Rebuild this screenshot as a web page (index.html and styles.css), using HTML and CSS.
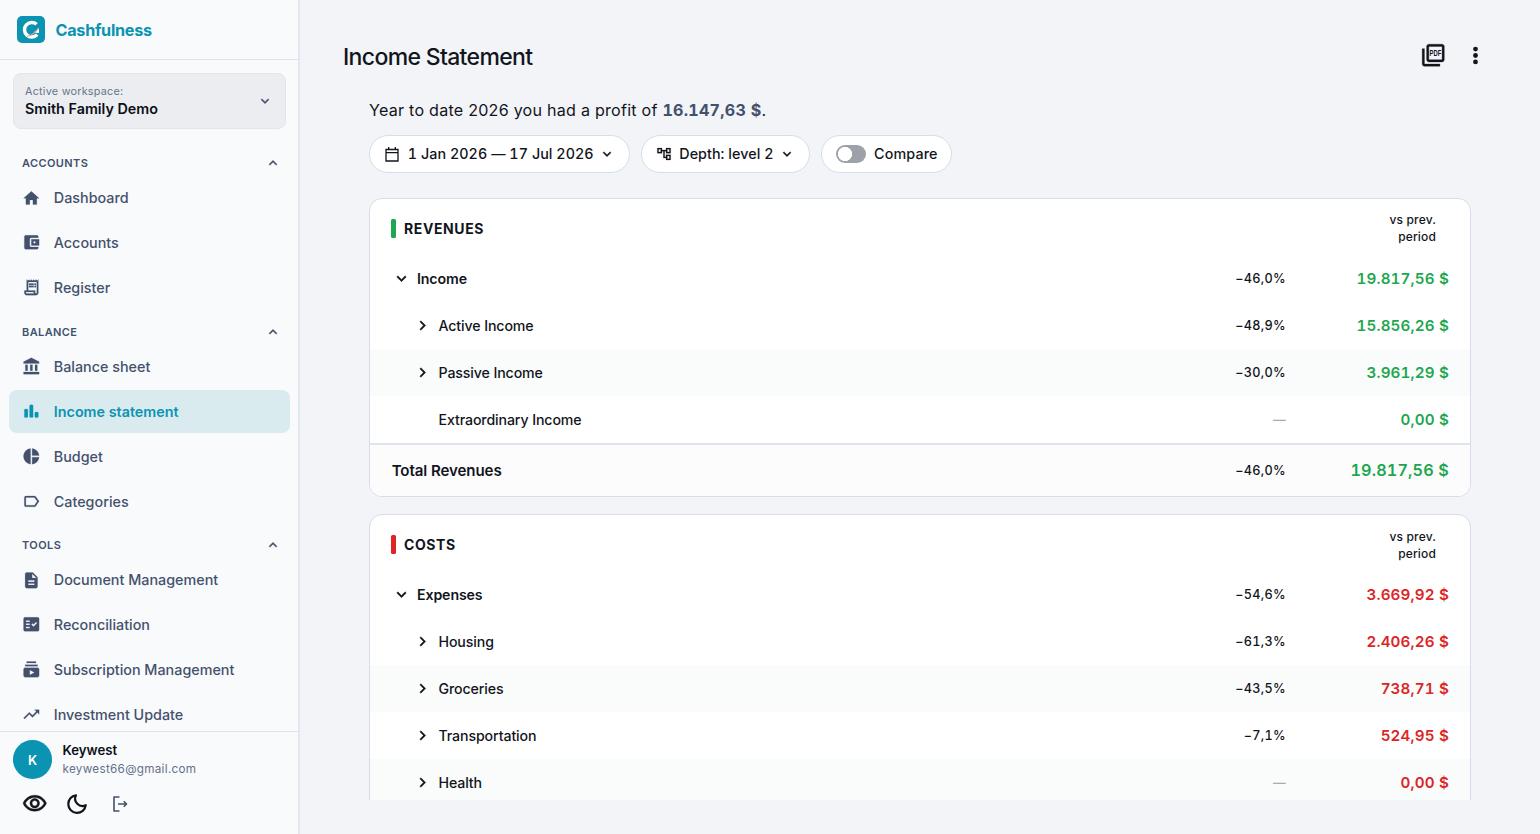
FILE: index.html
```html
<!DOCTYPE html>
<html lang="en">
<head>
<meta charset="utf-8">
<title>Cashfulness – Income Statement</title>
<link rel="stylesheet" href="styles.css">
</head>
<body>
<svg class="sprite" aria-hidden="true">
  <symbol id="less" viewBox="0 0 24 24"><path d="M12 8l-6 6 1.41 1.41L12 10.83l4.59 4.58L18 14z"/></symbol>
  <symbol id="more" viewBox="0 0 24 24"><path d="M16.59 8.59L12 13.17 7.41 8.59 6 10l6 6 6-6z"/></symbol>
  <symbol id="right" viewBox="0 0 24 24"><path d="M10 6L8.59 7.41 13.17 12l-4.58 4.59L10 18l6-6z"/></symbol>
</svg>
<div class="app">
  <aside class="sidebar">
    <div class="brand">
      <svg class="logo" viewBox="0 0 28 27"><rect width="28" height="27" rx="5" fill="#0b93b2"/><path d="M19.600 8.200A7.300 7.300 0 1 0 20.200 18.600" fill="none" stroke="#fff" stroke-width="3.500"/><path d="M16.500 16.500L22 12.500V17z" fill="#fff"/><path d="M10 20.200C14.500 19.800 18.500 16.800 21.600 11.800" fill="none" stroke="#e99a90" stroke-width="1.100"/></svg>
      <span class="brand-name">Cashfulness</span>
    </div>
    <div class="workspace">
      <div class="workspace-text"><span class="workspace-label">Active workspace:</span><span class="workspace-name">Smith Family Demo</span></div>
      <svg class="chev"><use href="#more"/></svg>
    </div>
    <nav class="nav">
      <div class="group"><span>ACCOUNTS</span><svg class="chev"><use href="#less"/></svg></div>
      <a class="item"><svg class="icon" viewBox="0 0 24 24"><path d="M10 20v-6h4v6h5v-8h3L12 3 2 12h3v8z"/></svg><span>Dashboard</span></a>
      <a class="item"><svg class="icon" viewBox="0 0 24 24"><path d="M21 18v1c0 1.100-.9 2-2 2H5c-1.110 0-2-.9-2-2V5c0-1.100.89-2 2-2h14c1.100 0 2 .9 2 2v1h-9c-1.110 0-2 .9-2 2v8c0 1.100.89 2 2 2h9zm-9-2h10V8H12v8zm4-2.500c-.83 0-1.500-.67-1.500-1.500s.67-1.500 1.500-1.500 1.500.67 1.500 1.500-.67 1.500-1.500 1.500z"/></svg><span>Accounts</span></a>
      <a class="item"><svg class="icon" viewBox="0 0 24 24"><path d="M19.500 3.500L18 2l-1.500 1.500L15 2l-1.500 1.500L12 2l-1.500 1.500L9 2 7.500 3.500 6 2v14H3v3c0 1.660 1.340 3 3 3h12c1.660 0 3-1.340 3-3V2l-1.500 1.500zM15 20H6c-.55 0-1-.45-1-1v-1h10v2zm4-1c0 .55-.45 1-1 1s-1-.45-1-1v-3H8V5h11v14zM9 7h6v2H9zM16 7h2v2h-2zM9 10h6v2H9zM16 10h2v2h-2z"/></svg><span>Register</span></a>
      <div class="group"><span>BALANCE</span><svg class="chev"><use href="#less"/></svg></div>
      <a class="item"><svg class="icon" viewBox="0 0 24 24"><path d="M4.300 10h3v7.500h-3zM10.500 10h3v7.500h-3zM16.700 10h3v7.500h-3zM2 19.200h20V22H2zM12 1L2 6v2.200h20V6z"/></svg><span>Balance sheet</span></a>
      <a class="item active"><svg class="icon" viewBox="0 0 24 24"><rect x="3" y="9" width="4.600" height="11" rx="1.500"/><rect x="9.700" y="3.500" width="4.600" height="16.500" rx="1.500"/><rect x="16.400" y="13" width="4.600" height="7" rx="1.500"/></svg><span>Income statement</span></a>
      <a class="item"><svg class="icon" viewBox="0 0 24 24"><path d="M11 2v20c-5.070-.5-9-4.790-9-10s3.930-9.500 9-10zm2.030 0v8.990H22c-.47-4.740-4.240-8.520-8.970-8.990zm0 11.010V22c4.740-.47 8.500-4.250 8.970-8.990h-8.970z"/></svg><span>Budget</span></a>
      <a class="item"><svg class="icon" viewBox="0 0 24 24"><path d="M17.630 5.840C17.270 5.330 16.670 5 16 5L5 5.010C3.900 5.010 3 5.900 3 7v10c0 1.100.9 1.990 2 1.990L16 19c.67 0 1.270-.33 1.630-.84L22 12l-4.370-6.160zM16 17H5V7h11l3.550 5L16 17z"/></svg><span>Categories</span></a>
      <div class="group"><span>TOOLS</span><svg class="chev"><use href="#less"/></svg></div>
      <a class="item"><svg class="icon" viewBox="0 0 24 24"><path d="M14 2H6c-1.100 0-1.990.9-1.990 2L4 20c0 1.100.89 2 1.990 2H18c1.100 0 2-.9 2-2V8l-6-6zm2 16H8v-2h8v2zm0-4H8v-2h8v2zm-3-5V3.500L18.500 9H13z"/></svg><span>Document Management</span></a>
      <a class="item"><svg class="icon" viewBox="0 0 24 24"><path d="M20 3H4c-1.100 0-2 .9-2 2v14c0 1.100.9 2 2 2h16c1.100 0 2-.9 2-2V5c0-1.100-.9-2-2-2zM10 17H5v-2h5v2zm0-4H5v-2h5v2zm0-4H5V7h5v2zm4.820 6L12 12.160l1.410-1.410 1.410 1.420L17.990 9l1.420 1.420L14.820 15z"/></svg><span>Reconciliation</span></a>
      <a class="item"><svg class="icon" viewBox="0 0 24 24"><path d="M20 8H4V6h16v2zm-2-6H6v2h12V2zm4 10v8c0 1.100-.9 2-2 2H4c-1.100 0-2-.9-2-2v-8c0-1.100.9-2 2-2h16c1.100 0 2 .9 2 2zm-6 4l-6-3.270v6.530L16 16z"/></svg><span>Subscription Management</span></a>
      <a class="item"><svg class="icon" viewBox="0 0 24 24"><path d="M16 6l2.290 2.290-4.880 4.880-4-4L2 16.590 3.410 18l6-6 4 4 6.300-6.290L22 12V6z"/></svg><span>Investment Update</span></a>
    </nav>
    <div class="user">
      <div class="user-row">
        <div class="avatar">K</div>
        <div class="user-text"><span class="user-name">Keywest</span><span class="user-mail">keywest66@gmail.com</span></div>
      </div>
      <div class="user-actions">
        <svg class="eye" viewBox="0 0 24 24"><path d="M12 6c3.790 0 7.170 2.130 8.820 5.500C19.170 14.870 15.790 17 12 17s-7.170-2.130-8.820-5.500C4.830 8.130 8.210 6 12 6m0-2C7 4 2.730 7.110 1 11.500 2.730 15.890 7 19 12 19s9.270-3.110 11-7.500C21.270 7.110 17 4 12 4zm0 5c1.380 0 2.500 1.120 2.500 2.500S13.380 14 12 14s-2.500-1.120-2.500-2.500S10.620 9 12 9m0-2c-2.480 0-4.500 2.020-4.500 4.500S9.520 16 12 16s4.500-2.020 4.500-4.500S14.480 7 12 7z"/></svg>
        <svg class="moon" viewBox="0 0 24 24"><path d="M11 3.300A8.800 8.800 0 1 0 20.800 13.200 7.300 7.300 0 0 1 11 3.300z"/></svg>
        <svg class="logout" viewBox="0 0 18 18"><path d="M8.500 2H3v14h5.500M7 9h8.500M12.800 6.300L15.500 9l-2.700 2.700"/></svg>
      </div>
    </div>
  </aside>
  <main class="main">
    <header class="top">
      <h1>Income Statement</h1>
      <div class="top-actions">
        <svg class="pdf" viewBox="0 0 24 24"><path d="M20 2H8c-1.100 0-2 .9-2 2v12c0 1.100.9 2 2 2h12c1.100 0 2-.9 2-2V4c0-1.100-.9-2-2-2zm0 14H8V4h12v12zM4 6H2v14c0 1.100.9 2 2 2h14v-2H4V6z"/><text x="14" y="12.800" text-anchor="middle" textLength="10.600" lengthAdjust="spacingAndGlyphs">PDF</text></svg>
        <svg class="dots" viewBox="0 0 24 24"><circle cx="12" cy="5.800" r="2.300"/><circle cx="12" cy="12" r="2.300"/><circle cx="12" cy="18.200" r="2.300"/></svg>
      </div>
    </header>
    <div class="content">
      <p class="summary">Year to date 2026 you had a profit of <b>16.147,63 $</b>.</p>
      <div class="filters">
        <button class="pill date"><svg class="cal" viewBox="0 0 16 16"><path d="M2 3.500h12V15H2zM2 6.600h12M4.700 1v2.500M11.300 1v2.500"/></svg><span>1 Jan 2026 — 17 Jul 2026</span><svg class="chev"><use href="#more"/></svg></button>
        <button class="pill depth"><svg class="tree" viewBox="0 0 24 24"><path d="M22 11V3h-7v3H9V3H2v8h7V8h2v10h4v3h7v-8h-7v3h-2V8h2v3h7zM7 9H4V5h3v4zm10 6h3v4h-3v-4zm0-10h3v4h-3V5z"/></svg><span>Depth: level 2</span><svg class="chev"><use href="#more"/></svg></button>
        <button class="pill compare"><i class="switch"></i><span>Compare</span></button>
      </div>
      <div class="scroll">
        <section class="card revenues">
          <div class="card-head"><h2>REVENUES</h2><span class="vs">vs prev.<br>period</span></div>
          <div class="row parent"><svg class="tog"><use href="#more"/></svg><span class="name">Income</span><span class="pct">−46,0%</span><span class="amt">19.817,56 $</span></div>
          <div class="row child"><svg class="tog"><use href="#right"/></svg><span class="name">Active Income</span><span class="pct">−48,9%</span><span class="amt">15.856,26 $</span></div>
          <div class="row child alt"><svg class="tog"><use href="#right"/></svg><span class="name">Passive Income</span><span class="pct">−30,0%</span><span class="amt">3.961,29 $</span></div>
          <div class="row child"><svg class="tog"></svg><span class="name">Extraordinary Income</span><span class="pct none">—</span><span class="amt">0,00 $</span></div>
          <div class="row total"><span class="name">Total Revenues</span><span class="pct">−46,0%</span><span class="amt">19.817,56 $</span></div>
        </section>
        <section class="card costs">
          <div class="card-head"><h2>COSTS</h2><span class="vs">vs prev.<br>period</span></div>
          <div class="row parent"><svg class="tog"><use href="#more"/></svg><span class="name">Expenses</span><span class="pct">−54,6%</span><span class="amt">3.669,92 $</span></div>
          <div class="row child"><svg class="tog"><use href="#right"/></svg><span class="name">Housing</span><span class="pct">−61,3%</span><span class="amt">2.406,26 $</span></div>
          <div class="row child alt"><svg class="tog"><use href="#right"/></svg><span class="name">Groceries</span><span class="pct">−43,5%</span><span class="amt">738,71 $</span></div>
          <div class="row child"><svg class="tog"><use href="#right"/></svg><span class="name">Transportation</span><span class="pct">−7,1%</span><span class="amt">524,95 $</span></div>
          <div class="row child alt"><svg class="tog"><use href="#right"/></svg><span class="name">Health</span><span class="pct none">—</span><span class="amt">0,00 $</span></div>
        </section>
      </div>
    </div>
  </main>
</div>
</body>
</html>
```
FILE: styles.css
```css
* { box-sizing: border-box; }
body { margin: 0; font-family: Inter, "Liberation Sans", sans-serif; color: #12151c; background: #f2f4f8; }
.sprite { display: none; }
svg { display: block; flex: none; fill: currentColor; }
.app { display: flex; width: 100vw; height: 100vh; overflow: hidden; }

.sidebar { display: flex; flex-direction: column; flex: none; width: 300px; background: #f8fafc; border-right: 2px solid #e2e6ed; color: #44516c; }
.brand { display: flex; align-items: center; gap: 10.500px; flex: none; height: 60px; padding-left: 17px; border-bottom: 1px solid #e0e3e8; }
.logo { width: 28px; height: 27px; }
.brand-name { font-size: 16.200px; font-weight: 700; letter-spacing: -.27px; color: #0b93b2; }
.workspace { display: flex; align-items: center; justify-content: space-between; flex: none; height: 56px; margin: 13px 12px 0 13px; padding: 0 12px 0 11px; border: 1px solid #e2e6ec; border-radius: 8px; background: #ebedf1; }
.workspace-text { display: flex; flex-direction: column; padding-bottom: 2px; }
.workspace-label { font-size: 10.800px; line-height: 17px; letter-spacing: .24px; color: #697489; }
.workspace-name { font-size: 14.350px; line-height: 18px; font-weight: 600; color: #0c0f16; }
.chev { width: 16px; height: 16px; stroke: currentColor; stroke-width: .500; }
.nav { flex: 1; min-height: 0; overflow: hidden; padding: 11.800px 8px 0 9px; }
.group { display: flex; align-items: center; justify-content: space-between; height: 35.900px; padding: 8.500px 9px 0 13px; font-size: 11px; font-weight: 600; letter-spacing: .4px; }
.item + .group { margin-top: -1.900px; }
.item { display: flex; align-items: center; gap: 13.300px; height: 42.600px; margin-bottom: 2.260px; padding-left: 12.800px; border-radius: 8px; font-size: 14.350px; font-weight: 500; letter-spacing: 0; }
.icon { width: 18.700px; height: 18.700px; stroke: currentColor; stroke-width: .250; }
.active { background: #daebef; color: #0b93b2; font-weight: 600; }
.user { flex: none; height: 103px; border-top: 1px solid #e0e3e8; padding: 8px 13px 0; }
.user-row { display: flex; gap: 10.500px; height: 39px; }
.avatar { display: grid; place-items: center; width: 39px; height: 39px; border-radius: 50%; background: #0b93b2; color: #fff; font-size: 13px; font-weight: 600; }
.user-text { display: flex; flex-direction: column; padding-top: 2px; }
.user-name { font-size: 13.200px; line-height: 17.500px; font-weight: 600; color: #0c0f16; }
.user-mail { font-size: 11.700px; line-height: 18px; letter-spacing: .3px; color: #64708a; }
.user-actions { display: flex; align-items: center; padding: 12px 0 0 8.500px; height: 38px; color: #12151c; }
.eye { width: 25.500px; height: 25.500px; stroke: currentColor; stroke-width: .400; }
.moon { width: 24px; height: 24px; margin-left: 17.500px; fill: none; stroke: currentColor; stroke-width: 2.200; stroke-linejoin: round; }
.logout { width: 18px; height: 18px; margin-left: 22px; fill: none; stroke: #44516c; stroke-width: 1.600; stroke-linejoin: round; }

.main { flex: 1; min-width: 0; display: flex; flex-direction: column; }
.top { display: flex; align-items: center; justify-content: space-between; height: 98px; padding: 15px 52px 0 43px; }
h1 { margin: 0; font-size: 23px; font-weight: 500; letter-spacing: -.66px; }
.top-actions { display: flex; align-items: center; gap: 17px; padding-bottom: 2px; }
.pdf { width: 26.500px; height: 26.500px; stroke: currentColor; stroke-width: .300; }
.pdf text { font: 700 8.200px "Liberation Sans", sans-serif; stroke: none; }
.dots { width: 25px; height: 25px; }
.content { width: 1102px; margin-left: 69px; }
.summary { margin: 0; font-size: 16.100px; line-height: 24px; letter-spacing: .24px; }
.summary b { color: #44516c; font-weight: 700; font-variant-numeric: tabular-nums; }
.filters { display: flex; gap: 11px; margin-top: 13px; }
.pill { display: flex; align-items: center; height: 37.500px; padding: 0 0 0 14px; border: 1px solid #d6dee9; border-radius: 19px; background: #fff; font: 500 14.300px Inter, sans-serif; letter-spacing: .05px; white-space: nowrap; color: #12151c; font-variant-numeric: tabular-nums; }
.cal { width: 16px; height: 16px; margin-right: 7.800px; fill: none; stroke: currentColor; stroke-width: 1.300; }
.tree { width: 16px; height: 16px; margin-right: 7.800px; stroke: currentColor; stroke-width: .300; }
.pill .chev { margin-left: 5.500px; }
.switch { width: 30px; height: 18px; margin-right: 8.500px; border-radius: 9px; background: radial-gradient(circle at 9px 9px, #fff 6.800px, #9da1a9 7.400px); }
.date { width: 261px; }
.depth { width: 169px; padding-left: 13.500px; }
.compare { width: 131px; padding-left: 13.500px; letter-spacing: .15px; }
.scroll { display: flex; flex-direction: column; gap: 17.500px; height: 601.500px; margin-top: 25.500px; overflow: hidden; }
.card { flex: none; border: 1.500px solid #d6dee9; border-radius: 13px; background: #fff; overflow: hidden; }
.costs { padding-bottom: 24px; }
.card-head { display: flex; align-items: center; justify-content: space-between; height: 55.600px; padding: 3.400px 34px 0 21px; }
h2 { display: flex; align-items: center; gap: 8.500px; margin: 0; font-size: 14px; line-height: 19px; font-weight: 700; letter-spacing: .6px; }
h2::before { content: ""; width: 4.500px; height: 19px; border-radius: 1.500px; }
.vs { font-size: 12px; line-height: 17px; font-weight: 500; letter-spacing: .15px; text-align: right; }
.row { display: flex; align-items: center; height: 47px; padding: 0 21px 0 21.700px; font-size: 14.150px; font-weight: 500; letter-spacing: -.1px; }
.tog { width: 19px; height: 19px; margin-right: 6.300px; stroke: currentColor; stroke-width: .500; }
.row.child { padding-left: 43.200px; }
.parent .name { font-weight: 600; }
.alt { background: #fafbfb; }
.name { flex: 1; }
.pct { font-size: 12.700px; letter-spacing: .3px; font-variant-numeric: tabular-nums; }
.none { color: #a7adb6; }
.amt { width: 163px; text-align: right; font-size: 15.200px; font-weight: 600; letter-spacing: .15px; font-variant-numeric: tabular-nums; }
.revenues .amt { color: #1fa750; }
.costs .amt { color: #dc2626; }
.revenues h2::before { background: #1fa750; }
.costs h2::before { background: #dc2626; }
.total { height: 53px; border-top: 2px solid #dde4ec; background: #fcfcfc; }
.total .name { font-size: 15.100px; font-weight: 600; }
.total .amt { font-size: 16.200px; }
```
